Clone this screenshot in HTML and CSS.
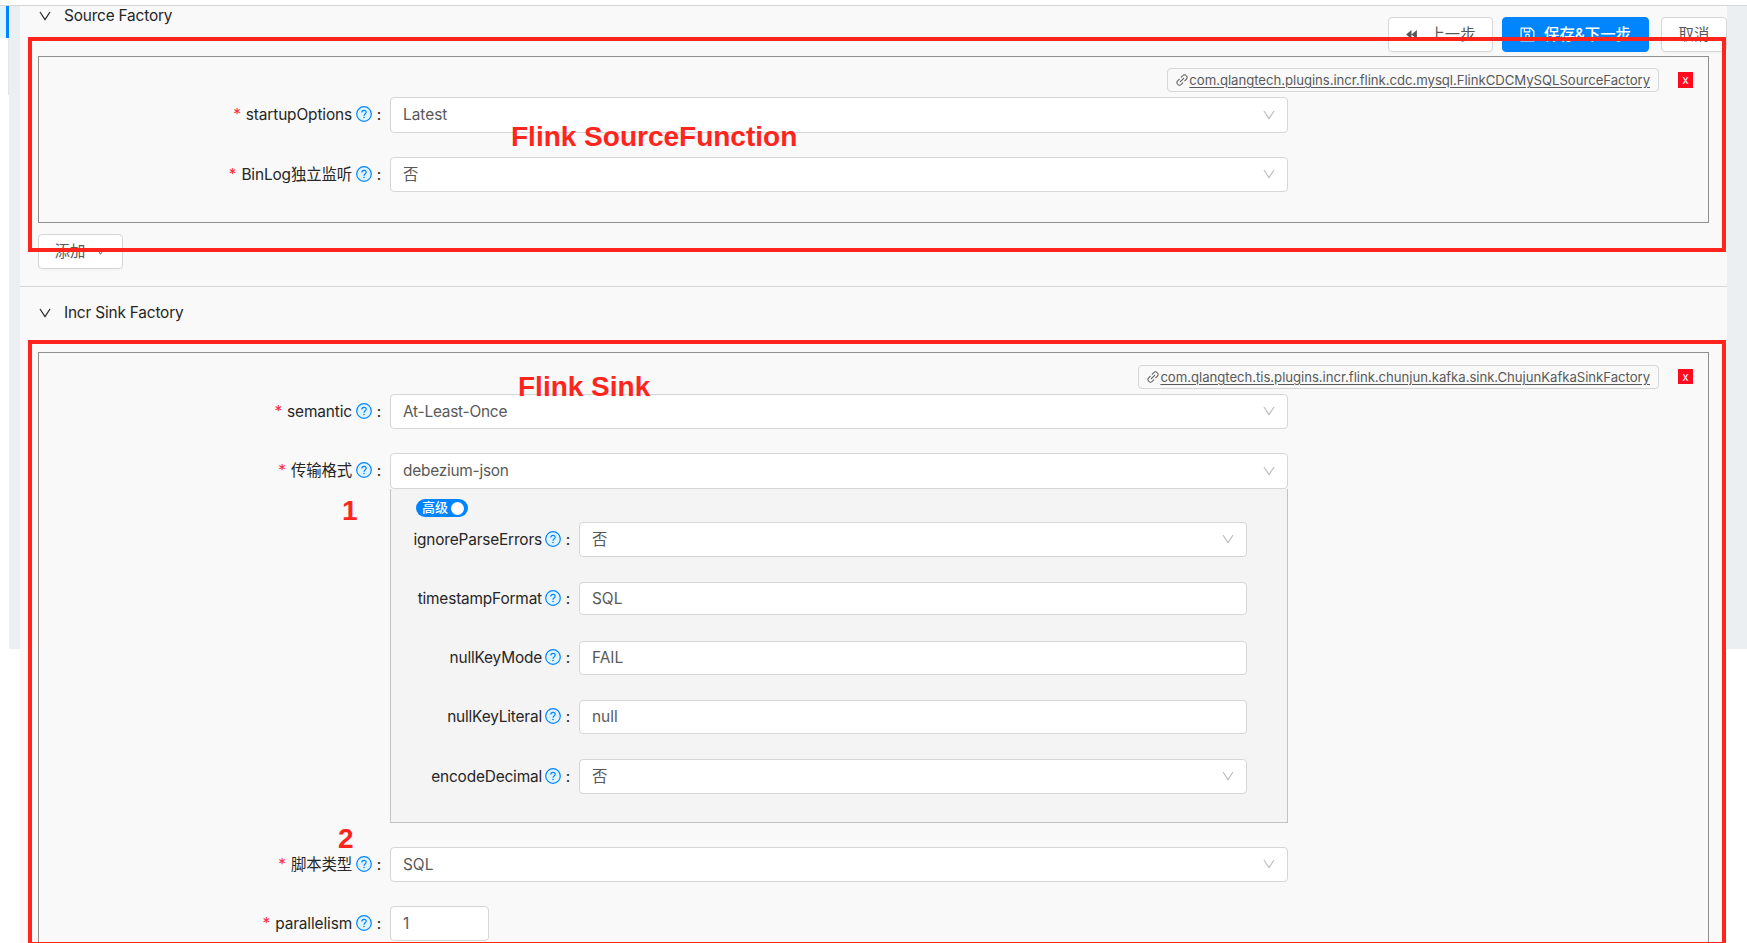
FILE: index.html
```
<!DOCTYPE html>
<html lang="zh-CN">
<head>
<meta charset="utf-8">
<title>Incr Flink Config</title>
<link rel="stylesheet" href="styles.css">
</head>
<body>
<svg class="defs" aria-hidden="true">
  <symbol id="i-down" viewBox="0 0 12 12"><path d="M1 2 6 9.600 11 2" fill="none" stroke="currentColor" stroke-width="1.2"/></symbol>
  <symbol id="i-help" viewBox="0 0 16 16"><circle cx="8" cy="8" r="7.3" fill="#e0f4ff" stroke="#0085ff" stroke-width="1.2"/><path d="M5.800 6.400c0-1.300 1-2.100 2.200-2.100s2.200.8 2.200 2c0 1.700-2.200 1.800-2.200 3.400" fill="none" stroke="#0085ff" stroke-width="1.15"/><circle cx="8" cy="11.500" r=".8" fill="#0085ff"/></symbol>
  <symbol id="i-link" viewBox="0 0 12 12"><g fill="none" stroke="currentColor" stroke-width="1.05" stroke-linecap="round"><path d="M5.200 3.200 6.900 1.500a2.100 2.100 0 0 1 3.100 0l.5.5a2.100 2.100 0 0 1 0 3L8.700 6.800M6.800 8.800 5.100 10.500a2.100 2.100 0 0 1-3.100 0L1.500 10a2.100 2.100 0 0 1 0-3L3.300 5.200M4.300 7.700 7.700 4.300"/></g></symbol>
  <symbol id="i-back" viewBox="0 0 12 10"><path d="M6 0v10L0 5zM12 0v10L6 5z" fill="currentColor"/></symbol>
  <symbol id="i-save" viewBox="0 0 16 16"><g fill="none" stroke="currentColor" stroke-width="1.3"><path d="M1.200 1.200H11.500L14.800 4.500V14.800H1.200zM4.700 1.200V5.200H10.300V1.200"/><circle cx="8" cy="9.600" r="2"/></g></symbol>
</svg>
<div class="page">
  <div class="topline"></div>
  <div class="shell">
    <aside class="side"><div class="side-active"></div><div class="side-line"></div></aside>
    <div class="gutter"></div>
    <main class="panel">
      <section>
        <header class="head head-first"><svg class="caret"><use href="#i-down"/></svg><span>Source Factory</span></header>
        <div class="box box-source">
          <div class="tagline">
            <a class="tag"><svg><use href="#i-link"/></svg><u>com.qlangtech.plugins.incr.flink.cdc.mysql.FlinkCDCMySQLSourceFactory</u></a>
            <b class="close">x</b>
          </div>
          <div class="row h36"><label><i>*</i><span>startupOptions</span><svg><use href="#i-help"/></svg><em>:</em></label><div class="field"><span>Latest</span><svg><use href="#i-down"/></svg></div></div>
          <div class="row"><label><i>*</i><span>BinLog独立监听</span><svg><use href="#i-help"/></svg><em>:</em></label><div class="field"><span>否</span><svg><use href="#i-down"/></svg></div></div>
        </div>
        <button class="btn add">添加<svg><use href="#i-down"/></svg></button>
      </section>
      <section class="second">
        <header class="head"><svg class="caret"><use href="#i-down"/></svg><span>Incr Sink Factory</span></header>
        <div class="box box-sink">
          <div class="tagline">
            <a class="tag"><svg><use href="#i-link"/></svg><u>com.qlangtech.tis.plugins.incr.flink.chunjun.kafka.sink.ChujunKafkaSinkFactory</u></a>
            <b class="close short">x</b>
          </div>
          <div class="row"><label><i>*</i><span>semantic</span><svg><use href="#i-help"/></svg><em>:</em></label><div class="field tight"><span>At-Least-Once</span><svg><use href="#i-down"/></svg></div></div>
          <div class="row h36 joined"><label><i>*</i><span>传输格式</span><svg><use href="#i-help"/></svg><em>:</em></label><div class="field tight"><span>debezium-json</span><svg><use href="#i-down"/></svg></div></div>
          <div class="nested">
            <div class="switch"><span>高级</span><div class="knob"></div></div>
            <div class="row gap25"><label><span>ignoreParseErrors</span><svg><use href="#i-help"/></svg><em>:</em></label><div class="field"><span>否</span><svg><use href="#i-down"/></svg></div></div>
            <div class="row h33"><label><span>timestampFormat</span><svg><use href="#i-help"/></svg><em>:</em></label><div class="field"><span>SQL</span></div></div>
            <div class="row h34"><label><span>nullKeyMode</span><svg><use href="#i-help"/></svg><em>:</em></label><div class="field"><span>FAIL</span></div></div>
            <div class="row h34"><label><span>nullKeyLiteral</span><svg><use href="#i-help"/></svg><em>:</em></label><div class="field"><span>null</span></div></div>
            <div class="row"><label><span>encodeDecimal</span><svg><use href="#i-help"/></svg><em>:</em></label><div class="field"><span>否</span><svg><use href="#i-down"/></svg></div></div>
          </div>
          <div class="row"><label><i>*</i><span>脚本类型</span><svg><use href="#i-help"/></svg><em>:</em></label><div class="field"><span>SQL</span><svg><use href="#i-down"/></svg></div></div>
          <div class="row last"><label><i>*</i><span>parallelism</span><svg><use href="#i-help"/></svg><em>:</em></label><div class="field number"><span>1</span></div></div>
        </div>
      </section>
    </main>
    <div class="gutter gutter-right"></div>
  </div>
  <div class="actions">
    <button class="btn prev"><svg><use href="#i-back"/></svg>上一步</button>
    <button class="btn primary"><svg><use href="#i-save"/></svg>保存&amp;下一步</button>
    <button class="btn cancel">取消</button>
  </div>
  <div class="mark mark-source"></div>
  <div class="mark mark-sink"></div>
  <div class="note note-source">Flink SourceFunction</div>
  <div class="note note-sink">Flink Sink</div>
  <div class="note note-1">1</div>
  <div class="note note-2">2</div>
</div>
</body>
</html>
```
FILE: styles.css
```
* { box-sizing: border-box; }
html, body { height: 943px; overflow: hidden; }
body {
  margin: 0;
  background: #fff;
  color: #262626;
  font: 15.4px/20px Inter, "Noto Sans CJK SC", sans-serif;
}
.defs { position: absolute; width: 0; height: 0; }
.page { position: relative; width: 1747px; height: 943px; overflow: hidden; display: flex; flex-direction: column; }
.topline { height: 6px; border-bottom: 1px solid #d6d6d6; flex: none; }
.shell { display: flex; flex: 1; min-height: 0; }
.side { width: 9px; }
.side-active { height: 32px; background: #dff5ff; border-right: 3px solid #0085ff; }
.side-line { height: 57px; border-right: 1px solid #e3e5e6; }
.gutter { width: 11px; height: 643px; background: #ebeff2; }
.gutter-right { width: 20px; }
.panel { width: 1707px; background: #f9f9f9; }

.head { display: flex; align-items: center; gap: 13px; height: 65px; padding: 0 19px 13px; }
.head-first { height: 50px; padding-bottom: 32px; padding-top: 2px; }
.head span { letter-spacing: -.18px; }
.caret { width: 12px; height: 12px; }

.box { margin: 0 18px; border: 1px solid #8f8f8f; }
.box-source { height: 167px; padding-top: 11px; }
.box-sink { height: 640px; padding-top: 12px; }
.tagline { display: flex; justify-content: flex-end; align-items: flex-start; gap: 19px; padding-right: 15px; height: 29px; }
.tag { display: flex; align-items: center; height: 24px; padding: 0 8px; border: 1px solid #d6d6d6; border-radius: 4px; color: #595959; font-size: 13.2px; letter-spacing: -.05px; }
.tag svg { width: 12px; height: 12px; margin-right: 1px; }
.tag u { text-underline-offset: 2px; white-space: nowrap; }
.close { width: 15px; height: 16px; margin-top: 4px; background: #ff0a1e; color: #fff; font-size: 12px; line-height: 15px; font-weight: 400; text-align: center; }
.close.short { height: 15px; }

.row { display: flex; height: 35px; margin-bottom: 24px; }
.row.h36 { height: 36px; }
.row.h33 { height: 33px; margin-bottom: 26px; }
.row.h34 { height: 34px; margin-bottom: 25px; }
.row.gap25 { margin-bottom: 25px; }
.row.joined, .row.last { margin-bottom: 0; }
.row label { width: 351px; padding-right: 9px; display: flex; justify-content: flex-end; align-items: center; white-space: nowrap; letter-spacing: -.12px; }
.row label i { color: #ff2a3c; font-style: normal; margin-right: 5px; }
.row label svg { width: 16px; height: 16px; margin: -2px 0 0 4px; }
.row label em { font-style: normal; width: 9px; text-align: right; }
.field { display: flex; align-items: center; justify-content: space-between; width: 898px; padding: 0 12px; background: #fff; border: 1px solid #d6d6d6; border-radius: 4px; color: #595959; }
.field.tight { letter-spacing: -.23px; }
.field svg { width: 12px; height: 12px; margin-top: -1px; color: #bfbfbf; }
.number { width: 99px; }

.nested { width: 898px; height: 334px; margin: 0 0 24px 351px; padding-top: 10px; background: #f4f4f4; border: 1px solid #c3c3c3; border-top: 0; }
.nested .row label { width: 188px; letter-spacing: -.17px; }
.nested .row label svg { margin-left: 3px; }
.nested .field { width: 668px; }
.switch { display: flex; align-items: center; justify-content: space-between; width: 52px; height: 18px; margin: 0 0 5px 25px; padding: 0 4px 0 6px; border-radius: 9px; background: #0085ff; color: #fff; font-size: 13px; line-height: 16px; }
.switch span { font-weight: 500; margin-top: -2px; }
.knob { width: 13px; height: 13px; border-radius: 50%; background: #fff; }

.btn { display: flex; align-items: center; justify-content: center; height: 35px; padding: 0; background: #fff; border: 1px solid #d6d6d6; border-radius: 4px; color: #595959; font: inherit; box-shadow: 0 2px 0 rgba(0,0,0,.02); }
.add { width: 85px; margin: 11px 0 0 18px; }
.add svg { width: 9px; height: 9px; margin: 0 1px 0 11px; }
.second { margin-top: 17px; border-top: 1px solid #d6d6d6; }
.actions { position: absolute; top: 17px; left: 1388px; width: 339px; display: flex; }
.prev { width: 105px; margin-right: 9px; padding-left: 1px; }
.prev svg { width: 11px; height: 9px; margin-right: 12px; }
.primary { width: 147px; margin-right: 12px; background: #0085ff; border-color: #0085ff; color: #fff; font-weight: 500; }
.primary svg { width: 15px; height: 15px; margin-right: 9px; }
.cancel { width: 66px; }

.mark { position: absolute; left: 28px; width: 1698px; border: 4px solid #ff251c; }
.mark-source { top: 37px; height: 215px; }
.mark-sink { top: 340px; height: 603px; border-bottom-width: 1px; }
.note { position: absolute; color: #ff251c; font: bold 28px/32px "Liberation Sans", Arial, sans-serif; white-space: nowrap; }
.note-source { left: 511px; top: 121px; }
.note-sink { left: 518px; top: 371px; }
.note-1 { left: 342px; top: 495px; }
.note-2 { left: 338px; top: 823px; }
```
